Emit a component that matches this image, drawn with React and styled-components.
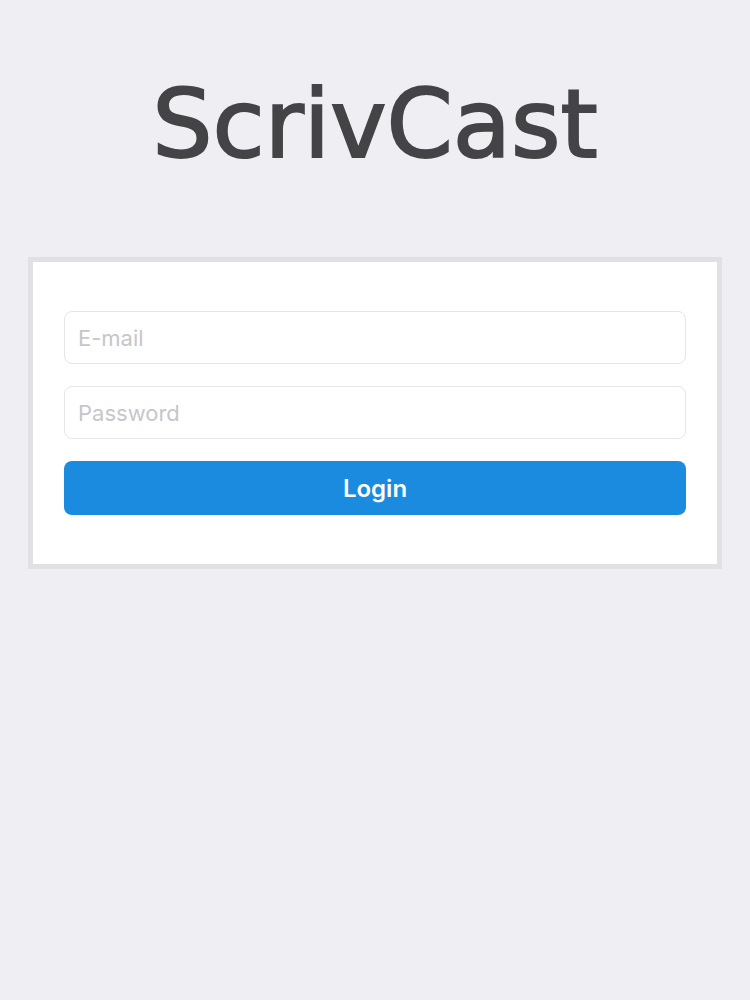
import styled, { createGlobalStyle } from "styled-components";

const GlobalStyle = createGlobalStyle`
    html, body {
        margin: 0;
        padding: 0;
        background-color: #efeef2;
        font-family: "Inter", "Liberation Sans", sans-serif;
    }
`;

const Page = styled.div`
    min-height: 1000px;
    display: flex;
    flex-direction: column;
    align-items: center;
    padding: 0 28px;
`;

const Logo = styled.h1`
    margin: 0;
    height: 257px;
    padding-top: 69px;
    box-sizing: border-box;
    font-family: "DejaVu Sans", "Noto Sans", sans-serif;
    font-size: 95px;
    font-weight: normal;
    line-height: 110px;
    color: #444346;
    -webkit-text-stroke: 2px #444346;
`;

const Card = styled.form`
    width: 100%;
    box-sizing: border-box;
    background-color: #ffffff;
    border: 5px solid #e1e0e4;
    padding: 49px 31px 49px 31px;
    display: flex;
    flex-direction: column;
    gap: 22px;
`;

const Input = styled.input`
    height: 53px;
    box-sizing: border-box;
    border: 1px solid #e6e5e9;
    border-radius: 8px;
    padding: 0 13px;
    font-family: "Inter", "Liberation Sans", sans-serif;
    font-size: 22px;
    color: #333;
    outline: none;

    &::placeholder {
        color: #c7c6cb;
    }
`;

const Button = styled.button`
    height: 54px;
    border: none;
    border-radius: 8px;
    background-color: #1b8be0;
    color: #ffffff;
    font-family: "Inter", "Liberation Sans", sans-serif;
    font-size: 24px;
    font-weight: 600;
    cursor: pointer;
`;

const App = () => (
    <>
        <GlobalStyle />
        <Page>
            <Logo>ScrivCast</Logo>
            <Card onSubmit={(e) => e.preventDefault()}>
                <Input type="email" placeholder="E-mail" />
                <Input type="password" placeholder="Password" />
                <Button type="submit">Login</Button>
            </Card>
        </Page>
    </>
);

export default App;
